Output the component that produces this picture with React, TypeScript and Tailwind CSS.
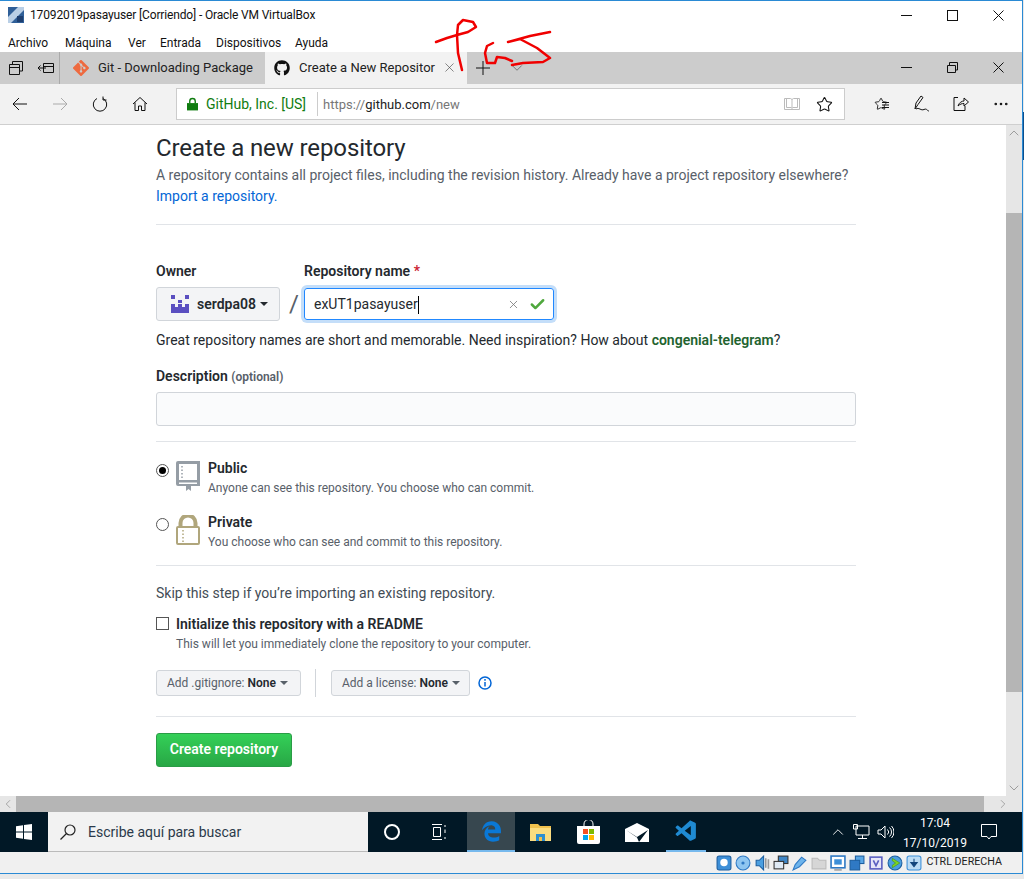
import { Check, ChevronDown, ChevronLeft, ChevronRight, ChevronUp, MoreHorizontal, Star, X } from "lucide-react";
import { FaEdgeLegacy, FaGithub } from "react-icons/fa";
import { SiGit } from "react-icons/si";
import { VscVscode } from "react-icons/vsc";

const menus = [
  { label: "Archivo", w: "w-[57px]" },
  { label: "Máquina", w: "w-[63px]" },
  { label: "Ver", w: "w-[32px]" },
  { label: "Entrada", w: "w-[56px]" },
  { label: "Dispositivos", w: "w-[79px]" },
  { label: "Ayuda", w: "w-[50px]" },
];

function Caret() {
  return <span className="ml-1 inline-block border-x-4 border-t-4 border-x-transparent border-t-current align-middle" />;
}

function Rule() {
  return <div className="h-px w-[700px] bg-[#e1e4e8]" />;
}

function TitleBar() {
  return (
    <div className="flex h-[29px] items-center bg-white text-[12px] text-[#111]">
      <svg viewBox="0 0 16 16" className="ml-2 h-4 w-4">
        <rect width="16" height="16" fill="#2f5f98" />
        <path d="M0 10 L10 0 H16 V3 L3 16 H0Z" fill="#b9cfe6" />
        <rect x="9" y="9" width="6" height="6" fill="#1d3f70" />
      </svg>
      <span className="ml-[6px] w-[871px] tracking-[-.15px]">17092019pasayuser [Corriendo] - Oracle VM VirtualBox</span>
      <WinControls restore={false} />
    </div>
  );
}

function WinControls({ restore }: { restore: boolean }) {
  return (
    <div className="flex items-center">
      <svg viewBox="0 0 11 11" className="h-[11px] w-[11px]">
        <path d="M0 5.5H11" stroke="#111" />
      </svg>
      <svg viewBox="0 0 11 11" className="ml-[35px] h-[11px] w-[11px]">
        {restore ? (
          <path d="M.5 3.5H8.5V10.5H.5ZM2.5 3.5V.5H10.5V8H8.5" fill="none" stroke="#111" />
        ) : (
          <rect x=".5" y=".5" width="10" height="10" fill="none" stroke="#111" />
        )}
      </svg>
      <svg viewBox="0 0 11 11" className="ml-[35px] h-[11px] w-[11px]">
        <path d="M.5 .5L10.5 10.5M10.5 .5L.5 10.5" stroke="#111" />
      </svg>
    </div>
  );
}

function TabStrip() {
  return (
    <div className="flex h-[32px] items-stretch bg-[#cccccc] text-[13px] text-[#222]">
      <div className="flex w-[60px] items-center border-r border-[#aaa] pl-[9px]">
        <svg viewBox="0 0 14 14" className="h-[14px] w-[14px]" fill="none" stroke="#111">
          <path d="M3.5 3V.5H13.5V10H11M.5 3.5H10.5V13.5H.5ZM.5 6.5H10.5" />
        </svg>
        <svg viewBox="0 0 16 12" className="ml-[15px] h-[12px] w-[16px]" fill="none" stroke="#111">
          <path d="M5.5 1.5H15.5V10.5H5.5ZM5.5 4.5H15.5M0 6H8M2.5 3.5L0 6L2.5 8.500" />
        </svg>
      </div>
      <div className="flex w-[205px] items-center pl-[13px]">
        <SiGit className="h-4 w-4 text-[#ee6a3f]" />
        <span className="ml-[9px]">Git - Downloading Package</span>
      </div>
      <div className="flex w-[202px] items-center bg-[#f2f2f2] pl-[9px]">
        <FaGithub className="h-4 w-4 text-[#111]" />
        <span className="ml-[9px] w-[143px] overflow-hidden whitespace-nowrap">Create a New Repositor</span>
        <X className="h-[15px] w-[15px] text-[#444]" strokeWidth={1} />
      </div>
      <div className="flex flex-1 items-center pl-[9px]">
        <svg viewBox="0 0 14 14" className="h-[14px] w-[14px]">
          <path d="M7 0V14M0 7H14" stroke="#111" />
        </svg>
        <ChevronDown className="ml-[18px] h-[18px] w-[18px] text-[#555]" strokeWidth={1} />
        <div className="ml-[375px]">
          <WinControls restore />
        </div>
      </div>
    </div>
  );
}

function AddressBar() {
  return (
    <div className="flex h-[41px] items-center border-b border-[#cfcfcf] bg-[#f2f2f2] text-[#111]">
      <svg viewBox="0 0 16 16" className="ml-3 h-4 w-4" fill="none" stroke="#111">
        <path d="M15 8H1M7 2L1 8L7 14" />
      </svg>
      <svg viewBox="0 0 16 16" className="ml-6 h-4 w-4" fill="none" stroke="#aaa">
        <path d="M1 8H15M9 2L15 8L9 14" />
      </svg>
      <svg viewBox="0 0 16 16" className="ml-6 h-4 w-4" fill="none" stroke="#111">
        <path d="M5 2.500A6.700 6.700 0 1 0 11 2.500M11 .5V4H14.500" />
      </svg>
      <svg viewBox="0 0 16 16" className="ml-6 h-4 w-4" fill="none" stroke="#111">
        <path d="M1 8L8 1.500L15 8M3 6.500V14.500H6.500V10H9.500V14.500H13V6.500" />
      </svg>
      <div className="ml-[28px] flex h-[32px] w-[669px] items-center border border-[#ccc] bg-white pt-px text-[13px]">
        <svg viewBox="0 0 12 14" className="ml-[10px] h-[14px] w-[11px]">
          <path d="M3 6V4a3 3 0 0 1 6 0V6" fill="none" stroke="#107c10" strokeWidth="1.500" />
          <rect x="0" y="6" width="12" height="8" fill="#107c10" />
        </svg>
        <span className="ml-[8px] whitespace-nowrap text-[14px] text-[#107c10]">GitHub, Inc. [US]</span>
        <div className="ml-[11px] h-[24px] w-px bg-[#ccc]" />
        <span className="ml-[5px] w-[461px] text-[13px] text-[#777]">
          https://<span className="text-[#222]">github.com</span>/new
        </span>
        <svg viewBox="0 0 16 14" className="h-[14px] w-[16px]" fill="none" stroke="#bbb">
          <path d="M.5 1.500H6.500L8 2.500L9.500 1.500H15.500V12.500H.5ZM8 2.500V12.500M2.500 1.500V10.500H7.500M13.500 1.500V10.500H8.500" />
        </svg>
        <Star className="ml-[16px] h-[17px] w-[17px]" strokeWidth={1.500} />
      </div>
      <Star className="ml-[29px] h-[14px] w-[14px]" strokeWidth={1.500} />
      <svg viewBox="0 0 8 8" className="-ml-[7px] mt-[3px] h-2 w-2" stroke="#111">
        <path d="M1 1.500H8M1 4H8M1 6.500H8" />
      </svg>
      <svg viewBox="0 0 16 18" className="ml-[25px] h-[18px] w-[16px]" fill="none" stroke="#111">
        <path d="M1 14L2 8L7 1L9 2.500L4 9.500ZM2 14C5 12 7 16 10 14.500S13 16 15 16" />
      </svg>
      <svg viewBox="0 0 16 16" className="ml-[23px] h-4 w-4" fill="none" stroke="#111">
        <path d="M5 1.500H1V14.500H12V10M5 10C6 6.500 9 5 11 5V2L15.500 6L11 10V7.500C9 7.500 7 8 5 10Z" />
      </svg>
      <MoreHorizontal className="ml-[23px] h-[18px] w-[18px]" strokeWidth={1.500} />
    </div>
  );
}

function BookIcon() {
  return (
    <svg viewBox="0 0 24 30" className="h-[30px] w-[24px]">
      <path d="M2 0H24V25H15V30L12.500 28L10 30V25H2A2 2 0 0 1 0 23V2A2 2 0 0 1 2 0Z" fill="#959da5" />
      <rect x="3" y="3" width="18" height="16" fill="white" />
      <rect x="3" y="21.500" width="18" height="1.500" fill="white" />
      <path d="M6 5V18" stroke="#959da5" strokeWidth="1.500" strokeDasharray="1.500 2" />
    </svg>
  );
}

function LockIcon() {
  return (
    <svg viewBox="0 0 24 30" className="h-[30px] w-[24px]">
      <path d="M4.500 12V8a7.500 7.500 0 0 1 15 0V12" fill="none" stroke="#b0a67c" strokeWidth="4" />
      <rect x="1" y="12" width="22" height="17" rx="1" fill="white" stroke="#b0a67c" strokeWidth="2" />
      <path d="M7 15V27" stroke="#b0a67c" strokeWidth="1.500" strokeDasharray="1.500 2" />
    </svg>
  );
}

function RepoForm() {
  return (
    <div className="pl-[156px] text-[14px] text-[#24292e]">
      <h1 className="mt-[8px] text-[24px] leading-[30px] tracking-[-.1px]">Create a new repository</h1>
      <p className="mt-[2px] h-[21px] leading-[21px] text-[#586069]">
        A repository contains all project files, including the revision history. Already have a project repository elsewhere?
      </p>
      <a className="block leading-[21px] text-[#0366d6]">Import a repository.</a>
      <div className="mt-[17px]">
        <Rule />
      </div>

      <div className="mt-[36px] flex">
        <div>
          <div className="font-semibold leading-[20px]">Owner</div>
          <div className="mt-[6px] flex h-[34px] w-[124px] items-center rounded-[3px] border border-[#d1d5da] bg-[#f3f4f6] pl-[13px] pt-px font-semibold">
            <svg viewBox="0 0 20 18" className="h-[18px] w-[20px]" fill="#5a4fc0">
              <path d="M1 0H5V4H1ZM15 0H19V4H15ZM8 5H12V8H8ZM1 9H5V12H8V9H12V12H15V9H19V18H1Z" />
            </svg>
            <span className="ml-[7px]">serdpa08</span>
            <Caret />
          </div>
        </div>
        <div className="ml-[4px] mt-[25px] w-[20px] text-center text-[24px] leading-[36px] text-[#586069]">/</div>
        <div>
          <div className="font-semibold leading-[20px]">
            Repository name <span className="text-[#cb2431]">*</span>
          </div>
          <div className="mt-[7px] flex h-[32px] w-[250px] items-center rounded-[3px] border border-[#2188ff] pl-[9px] pt-[2px] ring-[3px] ring-[#c4def9]">
            <span>exUT1pasayuser</span>
            <span className="h-[18px] w-px bg-black" />
            <X className="ml-[88px] h-[13px] w-[13px] text-[#777]" strokeWidth={1.500} />
            <Check className="ml-[9px] h-[17px] w-[17px] text-[#4fa83d]" strokeWidth={3.500} />
          </div>
        </div>
      </div>

      <p className="mt-[8px] leading-[21px]">
        Great repository names are short and memorable. Need inspiration? How about{" "}
        <span className="font-semibold text-[#22632f]">congenial-telegram</span>?
      </p>

      <div className="mt-[15px] font-semibold leading-[21px]">
        Description <span className="text-[12px] text-[#586069]">(optional)</span>
      </div>
      <div className="mt-[4px] h-[34px] w-[700px] rounded-[3px] border border-[#d1d5da] bg-[#fafbfc]" />
      <div className="mt-[15px]">
        <Rule />
      </div>

      <div className="mt-[19px] flex h-[30px] items-start">
        <div className="mt-[3px] flex h-[13px] w-[13px] items-center justify-center rounded-full border border-[#555]">
          <div className="h-[7px] w-[7px] rounded-full bg-black" />
        </div>
        <div className="ml-[7px]">
          <BookIcon />
        </div>
        <div className="-mt-[3px] ml-[8px]">
          <div className="font-semibold leading-[20px]">Public</div>
          <div className="text-[12px] leading-[20px] text-[#586069]">Anyone can see this repository. You choose who can commit.</div>
        </div>
      </div>
      <div className="mt-[24px] flex h-[30px] items-start">
        <div className="mt-[3px] h-[13px] w-[13px] rounded-full border border-[#555]" />
        <div className="ml-[7px]">
          <LockIcon />
        </div>
        <div className="-mt-[3px] ml-[8px]">
          <div className="font-semibold leading-[20px]">Private</div>
          <div className="text-[12px] leading-[20px] text-[#586069]">You choose who can see and commit to this repository.</div>
        </div>
      </div>
      <div className="mt-[20px]">
        <Rule />
      </div>

      <p className="mt-[17px] leading-[21px] text-[#444d56]">Skip this step if you’re importing an existing repository.</p>
      <div className="mt-[10px] flex items-center">
        <div className="h-[13px] w-[13px] border border-[#555]" />
        <span className="ml-[7px] font-semibold leading-[20px]">Initialize this repository with a README</span>
      </div>
      <div className="ml-[20px] text-[12px] leading-[20px] text-[#586069]">This will let you immediately clone the repository to your computer.</div>

      <div className="mt-[15px] flex items-center">
        <div className="flex h-[26px] w-[145px] items-center rounded-[3px] border border-[#d1d5da] bg-[#f3f4f6] pl-[10px] text-[12px] text-[#586069]">
          Add .gitignore:&nbsp;<span className="font-semibold text-[#24292e]">None</span>
          <Caret />
        </div>
        <div className="ml-[14px] h-[28px] w-px bg-[#d1d5da]" />
        <div className="ml-[15px] flex h-[26px] w-[139px] items-center rounded-[3px] border border-[#d1d5da] bg-[#f3f4f6] pl-[10px] text-[12px] text-[#586069]">
          Add a license:&nbsp;<span className="font-semibold text-[#24292e]">None</span>
          <Caret />
        </div>
        <svg viewBox="0 0 14 14" className="ml-[8px] h-[14px] w-[14px]" fill="none" stroke="#0366d6" strokeWidth="1.500">
          <circle cx="7" cy="7" r="6" />
          <path d="M7 6V10.500M7 3V4.800" />
        </svg>
      </div>
      <div className="mt-[19px]">
        <Rule />
      </div>
      <button className="mt-[16px] h-[34px] w-[136px] rounded-[3px] border border-[#2a9c46] bg-gradient-to-b from-[#34d058] to-[#28a745] font-semibold text-white">
        Create repository
      </button>
    </div>
  );
}

function ScrollColumn() {
  return (
    <div className="flex w-[16px] shrink-0 flex-col items-center bg-[#e6e6e6] text-[#777]">
      <ChevronUp className="h-[16px] w-[16px]" strokeWidth={1} />
      <div className="mt-[72px] h-[479px] w-full bg-[#b5b5b5]" />
      <ChevronDown className="mt-[88px] h-[16px] w-[16px]" strokeWidth={1} />
    </div>
  );
}

function Taskbar() {
  return (
    <div className="flex h-[40px] items-center bg-[#011826] text-white">
      <div className="flex h-full w-[48px] items-center justify-center">
        <svg viewBox="0 0 16 16" className="h-4 w-4" fill="white">
          <path d="M0 2.300L7 1.300V7.500H0ZM8 1.100L16 0V7.500H8ZM0 8.500H7V14.700L0 13.700ZM8 8.500H16V16L8 14.900Z" />
        </svg>
      </div>
      <div className="flex h-full w-[320px] items-center border-b border-[#bbb] bg-[#f2f2f2] pl-[12px] pt-px text-[14px] text-[#2b3a4a]">
        <svg viewBox="0 0 16 16" className="h-4 w-4" fill="none" stroke="#222" strokeWidth="1.200">
          <circle cx="10" cy="6" r="5" />
          <path d="M6.500 9.500L.5 15.500" />
        </svg>
        <span className="ml-[12px]">Escribe aquí para buscar</span>
      </div>
      <div className="ml-[16px] h-4 w-4 rounded-full border-[2.500px] border-white" />
      <svg viewBox="0 0 16 16" className="ml-[31px] h-4 w-4" fill="none" stroke="white">
        <path d="M1 .5H11M1 15.500H11M2.500 3.500H9.500V12.500H2.500ZM14 1V3M14 5.500V9M14 13V15" />
      </svg>
      <div className="ml-[20px] flex h-full w-[48px] items-center justify-center border-b-[2px] border-[#76b9ed] bg-[#37474f]">
        <FaEdgeLegacy className="h-[21px] w-[21px] text-[#0a78d6]" />
      </div>
      <div className="ml-[15px] flex w-[21px]">
        <svg viewBox="0 0 21 18" className="h-[18px] w-[21px]">
          <path d="M0 1H8L10 3H21V18H0Z" fill="#f0c14d" />
          <rect x="0" y="5" width="21" height="13" fill="#fbdc7f" />
          <rect x="6" y="11" width="9" height="7" fill="#2f8fd0" />
          <rect x="9" y="14" width="3" height="4" fill="#f0c14d" />
        </svg>
      </div>
      <div className="ml-[26px]">
        <svg viewBox="0 0 23 24" className="h-[24px] w-[23px]">
          <path d="M7 7V4a4.500 4.500 0 0 1 9 0V7" fill="none" stroke="white" />
          <path d="M0 6H23V22a2 2 0 0 1 -2 2H2a2 2 0 0 1 -2 -2Z" fill="white" />
          <rect x="6" y="9" width="5" height="5" fill="#f25022" />
          <rect x="12" y="9" width="5" height="5" fill="#7fba00" />
          <rect x="6" y="15" width="5" height="5" fill="#00a4ef" />
          <rect x="12" y="15" width="5" height="5" fill="#ffb900" />
        </svg>
      </div>
      <div className="ml-[25px]">
        <svg viewBox="0 0 24 19" className="h-[19px] w-[24px]">
          <path d="M0 6L12 0L24 6V19H0Z" fill="white" />
          <path d="M1 7L12 14L23 7L14 19L12 14.500Z" fill="#011826" />
        </svg>
      </div>
      <div className="ml-[17px] flex h-full w-[40px] items-center justify-center border-b-[2px] border-[#76b9ed]">
        <VscVscode className="h-[25px] w-[25px] text-[#1f8ad2]" />
      </div>
      <ChevronUp className="ml-[123px] h-[18px] w-[18px]" strokeWidth={1.200} />
      <svg viewBox="0 0 17 16" className="ml-[6px] h-4 w-[17px]" fill="none" stroke="white">
        <path d="M3 2H16V11H3ZM9.500 11V14.500M5 14.500H14M.5 .5H4.500V5H.5Z" />
      </svg>
      <svg viewBox="0 0 17 14" className="ml-[7px] h-[14px] w-[17px]" fill="none" stroke="white">
        <path d="M1 5H4L8 1V13L4 9H1ZM10.500 4.500A3.500 3.500 0 0 1 10.500 9.500M12.500 2.500A6 6 0 0 1 12.500 11.500M14.500 1A8.500 8.500 0 0 1 14.500 13" />
      </svg>
      <div className="ml-[1px] w-[80px] pt-px text-center text-[12px] leading-[20px]">
        <div>17:04</div>
        <div>17/10/2019</div>
      </div>
      <svg viewBox="0 0 16 16" className="ml-[6px] h-4 w-4" fill="none" stroke="white">
        <path d="M.5 .5H15.500V12.500H10L8 15L6 12.500H.5Z" />
      </svg>
    </div>
  );
}

// one small drawing per VirtualBox status indicator
const statusIcons = [
  <>
    <rect x="1" y="1" width="13" height="13" rx="2" fill="#3d8fd8" stroke="#1d5fa0" />
    <circle cx="7.500" cy="7" r="3.500" fill="white" />
  </>,
  <>
    <circle cx="7.500" cy="7.500" r="6.500" fill="#8fc6f0" stroke="#2f79c4" />
    <circle cx="7.500" cy="7.500" r="1.500" fill="#2f79c4" />
  </>,
  <>
    <path d="M2 5H5L9 1V14L5 10H2Z" fill="#4b9fe0" stroke="#1d5fa0" />
    <path d="M11 3V12M13.500 4V13" stroke="#999" strokeWidth="1.500" />
  </>,
  <>
    <rect x="5" y="1" width="9" height="7" fill="#3f86c6" stroke="#333" />
    <rect x="1" y="6" width="9" height="7" fill="#dfeaf5" stroke="#333" />
  </>,
  <path d="M1 14L3 9L9 2L13 5L7 11Z" fill="#6db4ec" stroke="#2f79c4" />,
  <path d="M1 3H6L8 5H14V13H1Z" fill="#d6d6d6" stroke="#bbb" />,
  <>
    <rect x="1" y="1" width="13" height="11" fill="white" stroke="#2f79c4" strokeWidth="1.500" />
    <rect x="4" y="4" width="7" height="5" fill="#3d8fd8" />
    <path d="M4 14H11" stroke="#777" />
  </>,
  <>
    <rect x="6" y="1" width="8" height="7" fill="#5aa7e6" stroke="#1d5fa0" />
    <rect x="1" y="5" width="9" height="9" fill="#2f79c4" stroke="#1d5fa0" />
  </>,
  <>
    <rect x="2" y="2" width="11" height="11" fill="#e6e6f8" stroke="#5a5fc0" strokeWidth="1.500" />
    <path d="M5 5L7.500 10L10 5" fill="none" stroke="#5a5fc0" strokeWidth="1.500" />
  </>,
  <>
    <circle cx="7.500" cy="7.500" r="6.500" fill="#4b9fe0" stroke="#1d5fa0" />
    <path d="M5 3L12 7.500L5 12V9.500L8 7.500L5 5.500Z" fill="#7ed321" stroke="#3f8a10" strokeWidth=".5" />
  </>,
  <>
    <rect x="1" y="1" width="13" height="13" rx="2" fill="#bcdcf5" stroke="#3d8fd8" />
    <path d="M7.500 3.500V8M4.500 7H10.500L7.500 11Z" fill="#14467c" stroke="#14467c" />
  </>,
];

function StatusBar() {
  return (
    <div className="flex h-[21px] items-center justify-end bg-[#f0f0f0] pr-[20px] text-[10.7px] text-[#222]">
      <div className="mr-[3px] flex">
        {statusIcons.map((icon, i) => (
          <div key={i} className="flex w-[19px] justify-center">
            <svg viewBox="0 0 15 15" className="h-[16px] w-[16px]">
              {icon}
            </svg>
          </div>
        ))}
      </div>
      <span>CTRL DERECHA</span>
    </div>
  );
}

export default function App() {
  return (
    <div className="relative flex h-[879px] w-[1024px] flex-col overflow-hidden bg-[#e9e9e9] font-['Roboto',sans-serif]">
      <div className="flex h-[874px] w-[1022px] flex-col border-t border-b border-[#2a8ad4]">
        <TitleBar />
        <div className="flex h-[22px] items-center bg-white pl-2 pt-1 text-[12px] text-[#111]">
          {menus.map((m) => (
            <span key={m.label} className={m.w}>
              {m.label}
            </span>
          ))}
        </div>
        <TabStrip />
        <AddressBar />
        <div className="flex h-[672px]">
          <div className="flex-1 overflow-hidden bg-white">
            <RepoForm />
          </div>
          <ScrollColumn />
        </div>
        <div className="flex h-[16px] bg-[#b5b5b5] text-[#777]">
          <div className="flex w-[16px] items-center justify-center bg-[#e6e6e6]">
            <ChevronLeft className="h-[14px] w-[14px]" strokeWidth={1} />
          </div>
          <div className="flex-1" />
          <div className="flex w-[38px] items-center justify-center bg-[#e6e6e6]">
            <ChevronRight className="h-[14px] w-[14px]" strokeWidth={1} />
          </div>
        </div>
        <Taskbar />
        <StatusBar />
      </div>
      <div className="absolute right-[1px] top-0 h-[874px] w-px bg-[#2a8ad4]" />
      <div className="absolute right-0 top-[112px] h-[48px] w-px bg-[#0d4f8c]" />
      <svg viewBox="0 0 1024 879" className="pointer-events-none absolute left-0 top-0 h-[879px] w-[1024px]" fill="none" stroke="#f00000" strokeWidth="2.500" strokeLinejoin="round" strokeLinecap="round">
        <path d="M436 42L447 38L457 35L468 32L476 27L473 22L463 20L458 25L457 35L458 53L462 70" />
        <path d="M493 43L487 46L485 53L487 63L495 63L497 57L505 58L512 61" />
        <path d="M550 32L530 36L508 42L520 39L537 48L550 58L543 62L523 63L512 65" />
      </svg>
    </div>
  );
}
